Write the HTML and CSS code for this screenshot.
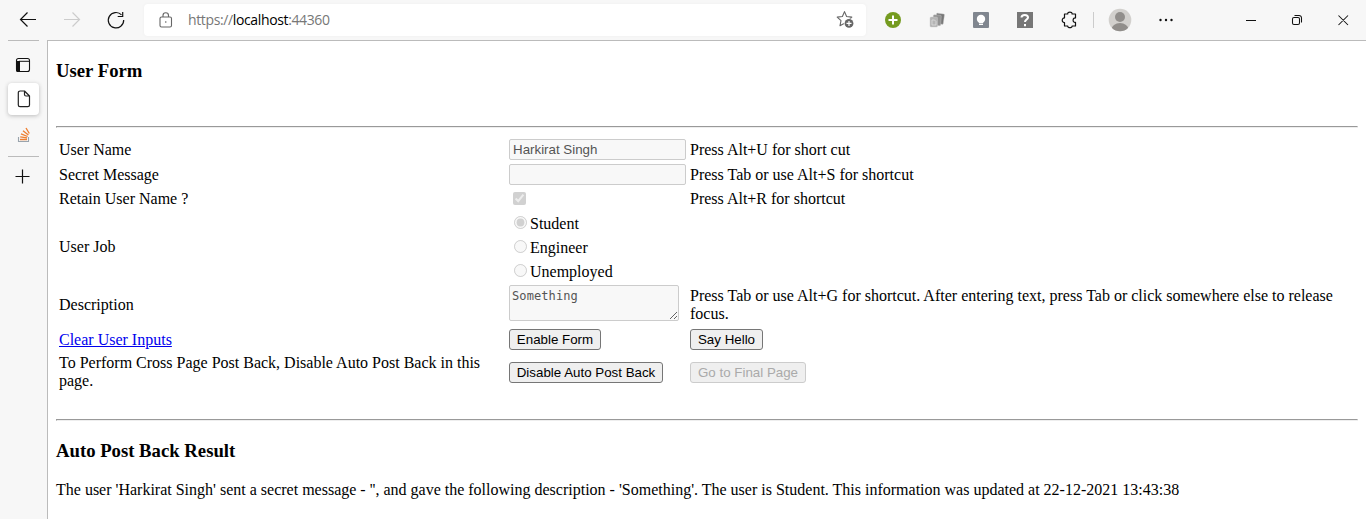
FILE: index.html
```html
<!DOCTYPE html>
<html lang="en">
<head>
<meta charset="utf-8">
<title>User Form</title>
<link rel="stylesheet" href="styles.css">
</head>
<body>
<div class="browser">
  <header class="toolbar">
    <svg class="nav-icons" width="144" height="40" viewBox="0 0 144 40" fill="none" stroke="#111" stroke-width="1.2">
      <path d="M36 19.500H20.500M27.500 12.500l-7 7 7 7"/>
      <path stroke="#ccc" d="M64 19.500h15.500M72.500 12.500l7 7-7 7"/>
      <path d="M121.500 14.800A7.700 7.700 0 1 0 123.700 20M122.700 12v4.500h-5"/>
    </svg>
    <div class="address">
      <svg class="lock" width="14" height="16" viewBox="0 0 14 16" fill="none" stroke="#666" stroke-width="1.1">
        <rect x="1" y="5" width="11.500" height="10" rx="1.500"/><path d="M4 5V3.500a2.750 2.750 0 0 1 5.500 0V5"/><circle cx="6.750" cy="10" r=".8" fill="#666" stroke="none"/>
      </svg>
      <span class="url">https://<span class="host">localhost</span>:44360</span>
      <svg class="star" width="20" height="20" viewBox="0 0 20 20">
        <path d="M8.500 1.600l2.100 4.900 5.200.6-3.800 3.500 1 5.100-4.500-2.500L4 15.700l1-5.100L1.200 7.100l5.200-.6z" fill="none" stroke="#666" stroke-width="1.100" stroke-linejoin="round"/>
        <circle cx="13" cy="13.400" r="5.200" fill="#fff"/><circle cx="13" cy="13.400" r="4.400" fill="#666"/><path d="M10.500 13.400h5M13 10.900v5" stroke="#fff" stroke-width="1.200"/>
      </svg>
    </div>
    <svg class="actions" width="500" height="40" viewBox="866 0 500 40">
      <circle cx="893" cy="20" r="8" fill="#759b20"/><path d="M888.500 20h9M893 15.500v9" stroke="#fff" stroke-width="2"/>
      <g stroke="#ccc" stroke-width=".4"><rect x="936" y="13.500" width="8" height="10.500" rx="1" fill="#777" transform="rotate(8 940 18)"/><rect x="933" y="15" width="8" height="10.500" rx="1" fill="#929292" transform="rotate(4 937 20)"/><rect x="930" y="17" width="7.500" height="10" rx="1" fill="#b5b5b5"/></g>
      <path d="M932 20h2.500l1.500 1.500V25h-4z" fill="none" stroke="#ddd" stroke-width=".8"/>
      <rect x="973" y="12" width="16" height="16" rx="1" fill="#80868f"/><circle cx="981" cy="19" r="4.200" fill="#fff"/><path d="M979 22h4v3h-4z" fill="#fff"/><path d="M979 23.500h4" stroke="#80868f" stroke-width=".6"/>
      <rect x="1017" y="12" width="16" height="16" fill="#777"/><path d="M1021.500 17.500c0-3.500 6.500-3.500 6.500 0 0 2-3 2.200-3 4.500M1025 24v2.200" fill="none" stroke="#fff" stroke-width="2"/>
      <path d="M1064.500 14h3.200c-.4-2.600 4.800-2.600 4.400 0h3.400v4c-3.200-.7-3.200 5 0 4.300V26h-3.400c.3 2.300-4.600 2.300-4.400 0h-3.200v-3.500c-3 .5-3-5 0-4.500z" fill="none" stroke="#111" stroke-width="1.200" stroke-linejoin="round"/>
      <path d="M1093.500 12v16" stroke="#ccc"/>
      <clipPath id="avatar"><circle cx="1120" cy="20" r="11.300"/></clipPath>
      <circle cx="1120" cy="20" r="11.300" fill="#d2d0cd"/><g clip-path="url(#avatar)" fill="#918e8b"><circle cx="1120" cy="17" r="5"/><ellipse cx="1120" cy="29.500" rx="8.500" ry="6.500"/></g>
      <g fill="#111"><circle cx="1160.500" cy="20" r="1.200"/><circle cx="1166" cy="20" r="1.200"/><circle cx="1171.500" cy="20" r="1.200"/></g>
      <g fill="none" stroke="#111" stroke-width="1.050"><path d="M1246 20.500h10"/><rect x="1292.500" y="17.500" width="7" height="7" rx="1.500"/><path d="M1294.500 15.500h4.500a2.500 2.500 0 0 1 2.500 2.500v4.500M1338.500 15.500l9.500 9.500M1348 15.500l-9.500 9.500"/></g>
    </svg>
  </header>
  <div class="main">
    <nav class="tabs">
      <svg class="tab-menu" width="16" height="16" viewBox="0 0 16 16"><rect x="1.500" y="1.500" width="13" height="13" rx="2" fill="none" stroke="#111" stroke-width="1.100"/><path d="M1 4h4v11H3a2 2 0 0 1-2-2z" fill="#111"/><path d="M4 4.300h10.500" stroke="#111"/></svg>
      <div class="tab active"><svg width="14" height="18" viewBox="0 0 14 18" fill="none" stroke="#222" stroke-width="1.200" stroke-linejoin="round"><path d="M3 1h4.500L12.500 6v9a1.700 1.700 0 0 1-1.700 1.700H3A1.700 1.700 0 0 1 1.300 15V2.700A1.700 1.700 0 0 1 3 1zM7.500 1v3.500A1.500 1.500 0 0 0 9 6h3.500"/></svg></div>
      <svg class="stack" width="16" height="16" viewBox="0 0 16 16" fill="none"><path d="M2.500 10v4.500h10V10" stroke="#9aa4ad" stroke-width="1.100"/><path d="M4 12.500h7M4.200 9.800l6.900 1.100M5 6.800l6.600 2.700M7 3.700l5.400 4.400M10 1l3.300 5.500" stroke="#ee7f31" stroke-width="1.350"/></svg>
      <div class="divider"></div>
      <svg class="plus" width="16" height="16" viewBox="0 0 16 16" stroke="#111" stroke-width="1.200"><path d="M.5 7.500h14M7.500 .5v14"/></svg>
    </nav>
    <main class="page">
      <h3>User Form</h3>
      <hr class="first-rule">
      <form class="form">
        <label>User Name</label><input class="text" value="Harkirat Singh" disabled><span>Press Alt+U for short cut</span>
        <label>Secret Message</label><input class="text" disabled><span>Press Tab or use Alt+S for shortcut</span>
        <label>Retain User Name ?</label><input class="check" type="checkbox" checked disabled><span>Press Alt+R for shortcut</span>
        <label class="job">User Job</label>
        <div class="radios">
          <label><input type="radio" checked disabled>Student</label>
          <label><input type="radio" disabled>Engineer</label>
          <label><input type="radio" disabled>Unemployed</label>
        </div><span></span>
        <label>Description</label><textarea disabled>Something</textarea><span>Press Tab or use Alt+G for shortcut. After entering text, press Tab or click somewhere else to release focus.</span>
        <a href="#">Clear User Inputs</a><button class="enable" type="button">Enable Form</button><button class="hello" type="button">Say Hello</button>
        <span class="note">To Perform Cross Page Post Back, Disable Auto Post Back in this page.</span><button class="post" type="button">Disable Auto Post Back</button><button class="final" type="button" disabled>Go to Final Page</button>
      </form>
      <hr class="second-rule">
      <h3>Auto Post Back Result</h3>
      <p>The user 'Harkirat Singh' sent a secret message - '', and gave the following description - 'Something'. The user is Student. This information was updated at 22-12-2021 13:43:38</p>
    </main>
  </div>
</div>
</body>
</html>
```
FILE: styles.css
```css
* { box-sizing: border-box; }
body { margin: 0; overflow: hidden; background: #f7f7f7; font: 16px/18px "Liberation Serif", serif; color: #000; }
svg { display: block; flex: none; }
.browser { height: 519px; display: flex; flex-direction: column; }
.toolbar { height: 40px; display: flex; flex: none; }
.address { width: 722px; height: 32px; margin-top: 4px; padding: 0 10px 0 15px; display: flex; align-items: center; background: #fff; border-radius: 4px; box-shadow: 0 0 3px #eee; }
.lock { margin-right: 15px; }
.url { font: 14px/20px "Open Sans", "Noto Sans", sans-serif; color: #777; letter-spacing: -.37px; }
.host { color: #000; }
.star { margin-left: auto; }
.main { display: flex; flex: 1; min-height: 0; }
.tabs { width: 47px; padding-left: 8px; display: flex; flex-direction: column; }
.tabs::before { content: ""; width: 31px; height: 1px; background: #bbb; }
.tab-menu { margin: 16px 0 0 7px; }
.tab { width: 31px; height: 32px; margin-top: 10px; display: flex; align-items: center; justify-content: center; background: #fff; border-radius: 4px; box-shadow: 0 1px 4px #bbb; }
.stack { margin: 12px 0 0 8px; }
.divider { width: 31px; height: 1px; margin-top: 13px; background: #bbb; }
.plus { margin: 12px 0 0 7px; }
.page { flex: 1; padding: 20px 8px 0; background: #fff; border: 1px solid #bbb; border-width: 1px 0 0 1px; }
h3 { margin: 0; font-size: 18.72px; line-height: 20px; }
hr { margin: 0; height: 2px; border: 1px solid; border-color: #999 #eee #eee #999; }
.first-rule { margin-top: 45px; }
.form { height: 254px; margin-top: 9px; padding-left: 3px; display: grid; grid-template-columns: 450px 181px 1fr; grid-template-rows: 25px 25px 24px 73px 42px 27px 38px; align-items: center; justify-items: start; }
.text { width: 177px; height: 21px; margin: 0; padding: 1px 3px; background: #f8f8f8; border: 1px solid #ccc; border-radius: 2px; font: 13.333px "Liberation Sans", sans-serif; color: #545454; }
.check { width: 13px; height: 13px; margin: 0 4px 2px; }
.job { padding-bottom: 1px; }
.radios { display: grid; grid-template-rows: repeat(3, 24px); align-items: center; padding-top: 1px; }
.radios label { display: flex; }
.radios input { width: 13px; height: 13px; margin: 1px 3px 0 5px; }
textarea { width: 170px; height: 36px; margin: 1px 0 0; padding: 2px; align-self: start; background: #f8f8f8; border: 1px solid #ccc; border-radius: 2px; font: 12px/16px "DejaVu Sans Mono", monospace; letter-spacing: .1px; color: #545454; overflow: hidden; }
button { height: 21px; padding: 0; background: #efefef; border: 1px solid #767676; border-radius: 3px; font: 13.333px "Liberation Sans", sans-serif; color: #000; }
button:disabled { border-color: #ccc; color: #aaa; }
.enable { width: 92px; }
.hello { width: 73px; }
.post { width: 154px; }
.final { width: 116px; }
a { color: #00e; }
.note { max-width: 440px; }
.second-rule { margin-top: 28px; }
.second-rule + h3 { margin-top: 20px; }
p { margin: 20px 0 0; white-space: nowrap; }
```
